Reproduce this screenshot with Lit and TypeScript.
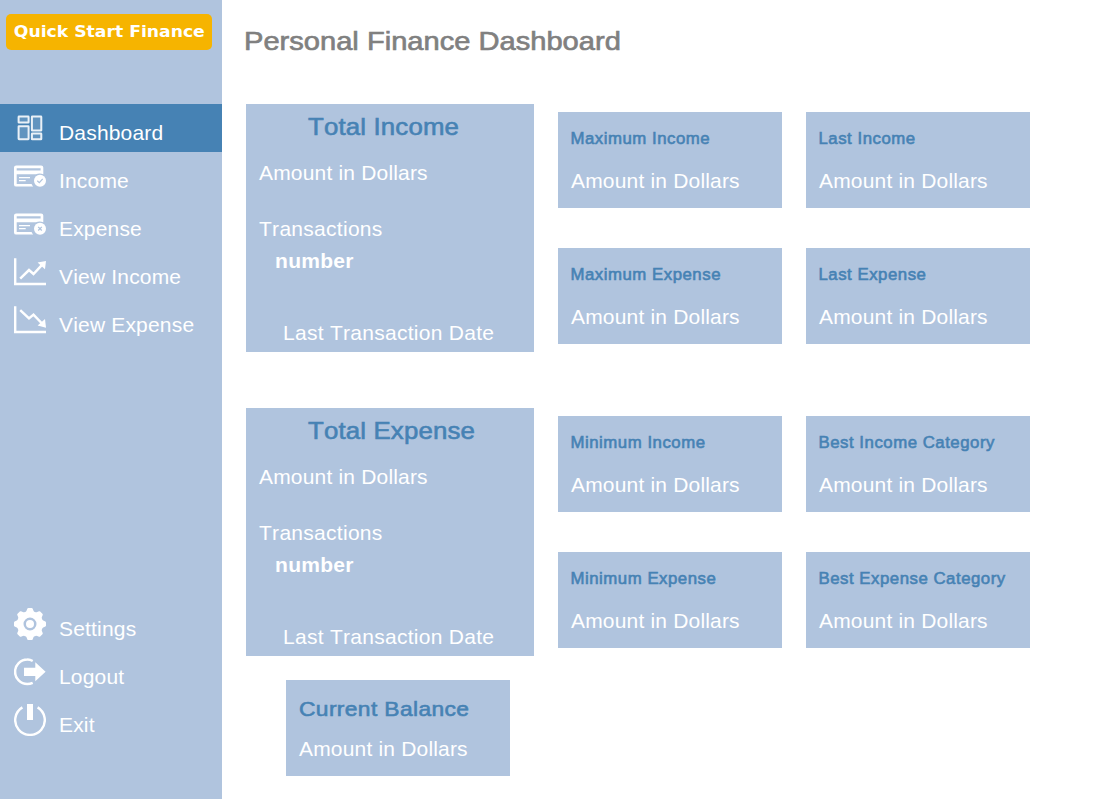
import { LitElement, html, svg, css } from "lit";
import { customElement, property } from "lit/decorators.js";

const creditCard = svg`
  <path d="M29.3 12.5V7.6Q29.3 5.4 27.1 5.4H2.2Q0 5.4 0 7.6V24.4Q0 26.6 2.2 26.6H19.2Q18 25.3 17.6 24H2.7V14.3H22Q25.5 12.6 29.3 14.2ZM2.7 8.3H26.6V10.4H2.7Z" fill-rule="evenodd" fill="#fff"/>
  <path d="M5 17.7H16M5 20.7H11.7" stroke="#fff" stroke-width="1.3"/>
  <circle cx="26" cy="20.7" r="6" fill="#fff"/>`;

const gearTeeth = [0, 45, 90, 135, 180, 225, 270, 315];

const icons: Record<string, unknown> = {
  dashboard: svg`<g fill="rgba(255,255,255,.15)" stroke="#fff" stroke-opacity=".88" stroke-width="2">
    <rect x="4.6" y="4.6" width="10" height="6" rx=".4"/>
    <rect x="17.9" y="4.6" width="9.4" height="14" rx=".4"/>
    <rect x="4.6" y="14.2" width="10" height="13" rx=".4"/>
    <rect x="17.9" y="21.6" width="9.4" height="5.7" rx=".4"/></g>`,
  income: svg`${creditCard}<path d="M23.3 20.8L25.3 22.7L28.7 18.9" fill="none" stroke="#b0c4de" stroke-width="1.2"/>`,
  expense: svg`${creditCard}<path d="M24.2 18.9L27.8 22.5M27.8 18.9L24.2 22.5" stroke="#b0c4de" stroke-width="1.3"/>`,
  viewIncome: svg`<path d="M1.2 2.3V28H32" fill="none" stroke="#fff" stroke-width="2.4"/>
    <path d="M6.2 22.6L15 14L19.5 18L28.5 8.4" fill="none" stroke="#fff" stroke-width="2.5"/>
    <path d="M32 5L23.6 6.4L31 13.2Z" fill="#fff"/>`,
  viewExpense: svg`<path d="M1.2 2.3V28H32" fill="none" stroke="#fff" stroke-width="2.4"/>
    <path d="M6.2 6.2L15 14.4L19.5 10.6L28.5 20" fill="none" stroke="#fff" stroke-width="2.5"/>
    <path d="M32 23.8L23.6 21.6L31 15Z" fill="#fff"/>`,
  settings: svg`<g fill="#fff"><circle cx="16" cy="16" r="9.8" fill="none" stroke="#fff" stroke-width="6.6"/>
    ${gearTeeth.map((a) => svg`<path d="M11.6 5L13.4 .6Q13.7 0 14.4 0H17.6Q18.3 0 18.6 .6L20.4 5Z" transform="rotate(${a} 16 16)"/>`)}
    <circle cx="16" cy="16" r="4"/></g>`,
  logout: svg`<path d="M18.7 5Q16 3.5 13.3 3.6A12.2 12.2 0 0 0 13.3 28Q16 28 18.7 26.8" fill="none" stroke="#fff" stroke-width="2.5"/>
    <path d="M10 11.7H21.3V6.2L31.6 15.7L21.3 25.2V20H10Z" fill="#fff"/>`,
  exit: svg`<path d="M8.4 3.4A14.8 14.8 0 1 0 23.6 3.4" fill="none" stroke="#fff" stroke-width="2.4"/>
    <path d="M13 0H19V16H13Z" fill="#fff"/>`,
};

@customElement("nav-item")
class NavItem extends LitElement {
  @property() icon = "";
  @property() label = "";
  @property({ type: Boolean, reflect: true }) active = false;

  static styles = css`
    :host { display: flex; box-sizing: border-box; height: 48px; padding: 8px 0 0 14px; color: #fff; }
    :host([active]) { background: #4682b4; }
    .icon { width: 32px; height: 32px; flex: none; }
    .label { padding: 9px 0 0 13px; font-size: 21px; line-height: 24px; letter-spacing: .18px; white-space: nowrap; }
  `;

  render() {
    return html`<svg class="icon" viewBox="0 0 32 32">${icons[this.icon]}</svg><span class="label">${this.label}</span>`;
  }
}

@customElement("stat-card")
class StatCard extends LitElement {
  @property() heading = "";
  @property({ type: Boolean, reflect: true }) large = false;

  static styles = css`
    :host { display: block; box-sizing: border-box; width: 224px; height: 96px; padding: 17px 13px 0; background: #b0c4de; color: #fff; white-space: nowrap; }
    .heading { width: max-content; margin-left: -.5px; color: #4682b4; font-size: 16.8px; line-height: 20px; letter-spacing: .52px; -webkit-text-stroke: .6px #4682b4; }
    .amount { margin-top: 20px; font-size: 21px; line-height: 24px; letter-spacing: .18px; }
    :host([large]) .heading { margin-left: 0; font-size: 21px; line-height: 24px; letter-spacing: .35px; transform: scaleX(1.085); transform-origin: left; }
    :host([large]) .amount { margin-top: 16px; }
  `;

  render() {
    return html`<div class="heading">${this.heading}</div><div class="amount">Amount in Dollars</div>`;
  }
}

@customElement("total-card")
class TotalCard extends LitElement {
  @property() heading = "";

  static styles = css`
    :host { display: block; box-sizing: border-box; height: 248px; padding: 8px 13px 0; background: #b0c4de; color: #fff; font-size: 21px; line-height: 24px; letter-spacing: .18px; white-space: nowrap; }
    .heading { width: max-content; margin-left: 49px; color: #4682b4; font-size: 24px; line-height: 30px; letter-spacing: .15px; -webkit-text-stroke: .6px #4682b4; transform: scaleX(1.075); transform-origin: left; }
    .amount { margin-top: 19px; }
    .transactions { margin-top: 32px; letter-spacing: .28px; }
    .number { margin-top: 8px; padding-left: 16px; font-weight: bold; letter-spacing: .3px; }
    .date { margin-top: 48px; padding-left: 24px; letter-spacing: .28px; }
  `;

  render() {
    return html`<div class="heading">${this.heading}</div>
      <div class="amount">Amount in Dollars</div>
      <div class="transactions">Transactions</div>
      <div class="number">number</div>
      <div class="date">Last Transaction Date</div>`;
  }
}

@customElement("app-root")
class AppRoot extends LitElement {
  static styles = css`
    :host { display: flex; height: 799px; overflow: hidden; background: #fff; font-family: "Liberation Sans", Arial, sans-serif; font-kerning: none; }
    .sidebar { width: 222px; flex: none; display: flex; flex-direction: column; background: #b0c4de; }
    .brand { box-sizing: border-box; width: 206px; height: 36px; margin: 14px 0 54px 6px; border-radius: 5px; background: #f6b400; color: #fff; font: bold 16px/36px "DejaVu Sans", sans-serif; text-align: center; white-space: nowrap; }
    .brand-name { display: inline-block; transform: translateX(.5px) scaleX(1.075); }
    .footer { margin-top: 256px; }
    .main { flex: 1; padding: 25px 0 0 24px; }
    .title { width: max-content; margin: 0 0 47px -2px; color: #808080; font-size: 26px; font-weight: normal; line-height: 32px; white-space: nowrap; -webkit-text-stroke: .65px #808080; transform: scaleX(1.119); transform-origin: left; }
    .section { display: grid; grid-template-columns: 288px 448px; column-gap: 24px; margin-bottom: 56px; }
    .stats { display: grid; grid-template-columns: 224px 224px; grid-auto-rows: 96px; gap: 40px 24px; padding-top: 8px; }
    .balance { margin: -32px 0 0 40px; }
  `;

  private section(total: string, stats: string[]) {
    return html`<section class="section">
      <total-card heading=${total}></total-card>
      <div class="stats">${stats.map((s) => html`<stat-card heading=${s}></stat-card>`)}</div>
    </section>`;
  }

  render() {
    return html`
      <aside class="sidebar">
        <div class="brand"><span class="brand-name">Quick Start Finance</span></div>
        <nav>
          <nav-item icon="dashboard" label="Dashboard" active></nav-item>
          <nav-item icon="income" label="Income"></nav-item>
          <nav-item icon="expense" label="Expense"></nav-item>
          <nav-item icon="viewIncome" label="View Income"></nav-item>
          <nav-item icon="viewExpense" label="View Expense"></nav-item>
        </nav>
        <nav class="footer">
          <nav-item icon="settings" label="Settings"></nav-item>
          <nav-item icon="logout" label="Logout"></nav-item>
          <nav-item icon="exit" label="Exit"></nav-item>
        </nav>
      </aside>
      <main class="main">
        <h1 class="title">Personal Finance Dashboard</h1>
        ${this.section("Total Income", ["Maximum Income", "Last Income", "Maximum Expense", "Last Expense"])}
        ${this.section("Total Expense", ["Minimum Income", "Best Income Category", "Minimum Expense", "Best Expense Category"])}
        <stat-card class="balance" large heading="Current Balance"></stat-card>
      </main>`;
  }
}
